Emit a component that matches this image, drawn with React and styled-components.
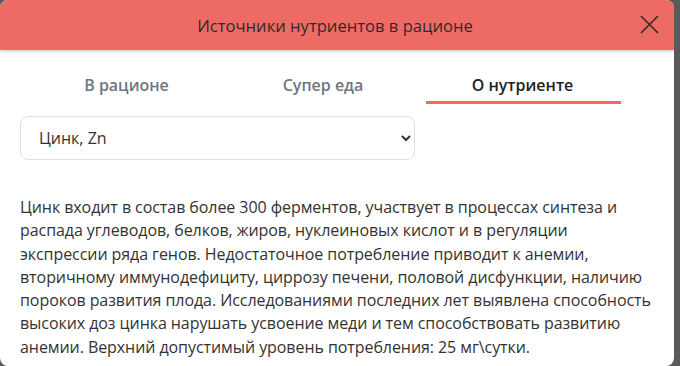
import styled, { createGlobalStyle } from 'styled-components';

const GlobalStyle = createGlobalStyle`
  html, body {
    margin: 0;
    padding: 0;
    background: #5a5a5a;
    font-family: 'Open Sans', 'Noto Sans', sans-serif;
  }
`;

const tabs = ['В рационе', 'Супер еда', 'О нутриенте'];

const App = () => {
  return (
    <>
      <GlobalStyle />
      <Modal>
        <Header>
          <Title>Источники нутриентов в рационе</Title>
          <CloseButton aria-label="Закрыть">
            <svg width="19" height="19" viewBox="0 0 19 19">
              <path d="M1 1L18 18M18 1L1 18" stroke="#2b2b2b" strokeWidth="1.6" fill="none" />
            </svg>
          </CloseButton>
        </Header>
        <Body>
          <Tabs>
            {tabs.map((t, i) => (
              <Tab key={t} $active={i === 2}>{t}</Tab>
            ))}
          </Tabs>
          <Select defaultValue="zn">
            <option value="zn">Цинк, Zn</option>
          </Select>
          <Text>
            Цинк входит в состав более 300 ферментов, участвует в процессах синтеза и распада
            углеводов, белков, жиров, нуклеиновых кислот и в регуляции экспрессии ряда генов.
            Недостаточное потребление приводит к анемии, вторичному иммунодефициту, циррозу печени,
            половой дисфункции, наличию пороков развития плода. Исследованиями последних лет выявлена
            способность высоких доз цинка нарушать усвоение меди и тем способствовать развитию анемии.
            Верхний допустимый уровень потребления: 25 мг\сутки.
          </Text>
        </Body>
      </Modal>
    </>
  );
};

export default App;

const Modal = styled.div`
  width: 674px;
  height: 366px;
  background: #fff;
  border-radius: 8px;
  overflow: hidden;
  display: flex;
  flex-direction: column;
`;

const Header = styled.div`
  height: 50px;
  background: #ee6b65;
  display: flex;
  align-items: center;
  justify-content: center;
  position: relative;
  box-shadow: 0 1px 3px rgba(0, 0, 0, 0.25);
  flex-shrink: 0;
`;

const Title = styled.h2`
  margin: 0 4px 0 0;
  font-size: 16.6px;
  font-weight: 500;
  color: #2b2b2b;
`;

const CloseButton = styled.button`
  position: absolute;
  right: 14px;
  top: 13px;
  width: 22px;
  height: 22px;
  padding: 0;
  border: none;
  background: none;
  display: flex;
  align-items: center;
  justify-content: center;
  cursor: pointer;
`;

const Body = styled.div`
  padding: 20px 20px 0;
  display: flex;
  flex-direction: column;
`;

const Tabs = styled.div`
  display: grid;
  grid-template-columns: 193px 200px 198px;
  margin-left: 10px;
`;

const Tab = styled.div`
  text-align: center;
  font-size: 16px;
  font-weight: 600;
  color: ${({ $active }) => ($active ? '#222' : '#6f767d')};
  padding: 4px 0 5px;
  border-bottom: 3px solid ${({ $active }) => ($active ? '#ee6b65' : 'transparent')};

  &:last-child {
    padding-right: 2px;
    margin-left: 3px;
  }
`;

const Select = styled.select`
  margin-top: 12px;
  width: 395px;
  height: 44px;
  padding: 0 12px 0 14px;
  border: 1px solid #e0e0e0;
  border-radius: 8px;
  background: #fff;
  font-family: inherit;
  font-size: 16px;
  font-weight: 500;
  color: #333;
`;

const Text = styled.p`
  margin: 36px 0 0;
  width: 633px;
  font-size: 16px;
  line-height: 23.3px;
  letter-spacing: -0.07px;
  color: #333;
`;
